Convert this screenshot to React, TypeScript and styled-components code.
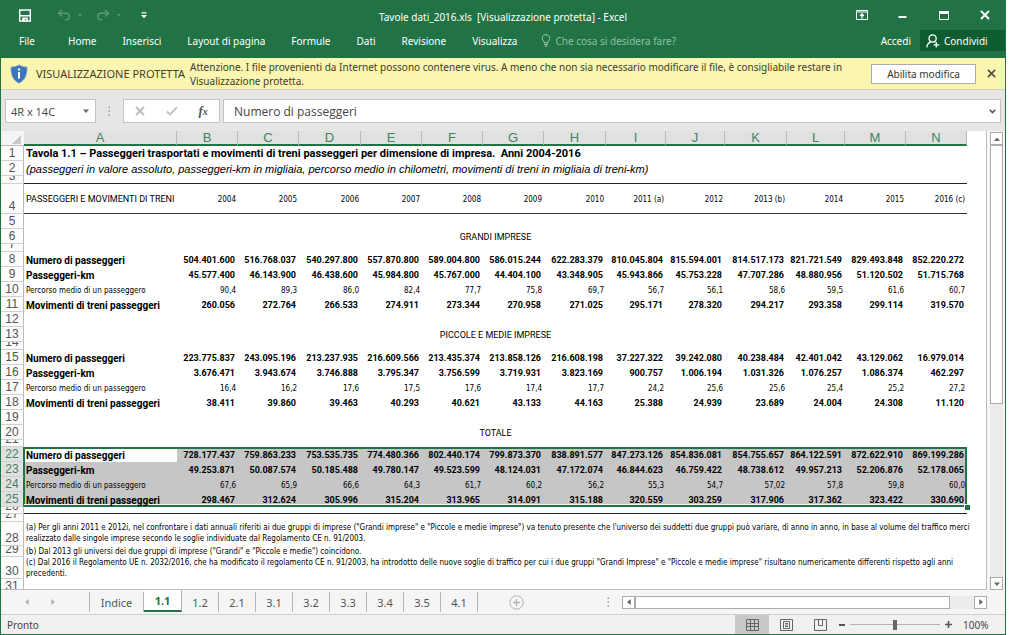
import React from 'react';
import styled, { createGlobalStyle, css } from 'styled-components';

const GREEN = '#217346';
const UI = '"Noto Sans", "Open Sans", sans-serif';
const UI_WIDE = '"Open Sans", "Noto Sans", sans-serif';
const SHEET = 'Roboto, "Liberation Sans", sans-serif';
const SMALL = '"DejaVu Sans Condensed", "DejaVu Sans", sans-serif';
const ARIAL = '"Liberation Sans", Arial, sans-serif';

const GlobalStyle = createGlobalStyle`
  * { box-sizing: border-box; }
  body { margin: 0; background: #fff; font-family: ${UI}; }
  button, input { font-family: inherit; margin: 0; padding: 0; border: 0; background: none; color: inherit; }
  svg { display: block; flex: none; }
`;

const Page = styled.div`
  height: 100vh;
  padding-right: 18px;
`;

const Window = styled.div`
  height: 100%;
  display: flex;
  flex-direction: column;
  border: 1px solid ${GREEN};
  border-top: 0;
  background: #e6e6e6;
`;

/* ---------- title bar and ribbon ---------- */

const Ribbon = styled.header`
  flex: none;
  background: ${GREEN};
  color: #fff;
  padding-bottom: 7px;
`;

const TitleBar = styled.div`
  display: grid;
  grid-template-columns: 1fr auto 1fr;
  align-items: center;
  height: 30px;
`;

const QuickAccess = styled.div`
  display: flex;
  align-items: center;
  padding-left: 17px;
`;

const QuickButton = styled.button<{ $gap?: number; $dim?: boolean }>`
  display: flex;
  align-items: center;
  gap: 7px;
  margin-right: ${(p) => p.$gap ?? 0}px;
  color: ${(p) => (p.$dim ? '#5c9a76' : '#fff')};
`;

const Title = styled.h1`
  margin: 3px 0 0;
  font-size: 10px;
  line-height: 14px;
  font-weight: 400;
  white-space: pre;
`;

const WindowButtons = styled.div`
  display: flex;
  justify-content: flex-end;
`;

const WindowButton = styled.button`
  width: 41px;
  height: 28px;
  display: flex;
  align-items: center;
  justify-content: center;
  color: #fff;
`;

const Menu = styled.nav`
  display: flex;
  align-items: center;
  height: 21px;
  font-size: 10px;
`;

const MenuTab = styled.button<{ $file?: boolean }>`
  height: 21px;
  padding: ${(p) => (p.$file ? '0 20px 0 18px' : '0 13px')};
  font-size: 10px;
  color: #fff;
`;

const TellMe = styled.label`
  display: flex;
  align-items: center;
  gap: 4px;
  flex: 1;
  padding-left: 11px;
  color: #a3cdb4;
  input { flex: 1; min-width: 0; font-size: 10px; }
  input::placeholder { color: #8fc0a3; opacity: 1; }
`;

const SignIn = styled.button`
  font-size: 10px;
  color: #fff;
  padding: 0 9px;
`;

const Share = styled.button`
  display: flex;
  align-items: center;
  gap: 4px;
  width: 85px;
  height: 21px;
  padding-left: 6px;
  background: #0e5c2f;
  color: #fff;
  font-size: 10px;
`;

/* ---------- protected view message ---------- */

const Message = styled.section`
  flex: none;
  display: flex;
  align-items: center;
  height: 32px;
  padding-left: 9px;
  background: #faf5b0;
  border-bottom: 1px solid #d2d0b4;
  color: #3f3d2c;
`;

const MessageTitle = styled.strong`
  margin-left: 8px;
  width: 154px;
  font-size: 11px;
  font-weight: 400;
  white-space: nowrap;
`;

const MessageText = styled.p`
  flex: 1;
  margin: 0;
  font-size: 10px;
  line-height: 14px;
`;

const EnableButton = styled.button`
  width: 105px;
  height: 20px;
  margin-left: 24px;
  background: #fff;
  border: 1px solid #ababab;
  color: #333;
  font-size: 10px;
`;

const CloseMessage = styled.button`
  width: 29px;
  padding-left: 2px;
  display: flex;
  justify-content: center;
  color: #57553f;
`;

/* ---------- formula bar ---------- */

const FormulaBar = styled.div`
  flex: none;
  display: flex;
  align-items: center;
  height: 41px;
  padding: 1px 4px 0 4px;
`;

const Box = styled.div<{ $width?: number }>`
  display: flex;
  align-items: center;
  height: 24px;
  ${(p) => (p.$width ? css`width: ${p.$width}px;` : css`flex: 1; margin-left: 3px;`)}
  background: #fff;
  border: 1px solid #c3c3c3;
  color: #444;
  input { flex: 1; min-width: 0; height: 22px; font: 12px ${UI_WIDE}; color: #444; }
`;

const NameInput = styled.input`
  padding-left: 5px;
  && { font-size: 11px; }
`;

const FormulaInput = styled.input`
  padding-left: 10px;
`;

const BoxButton = styled.button<{ $width: number }>`
  width: ${(p) => p.$width}px;
  display: flex;
  justify-content: center;
`;

const Grip = styled.span`
  width: 27px;
  flex: none;
  display: flex;
  justify-content: center;
`;

const FxText = styled.span`
  font: italic 700 13px/16px "Liberation Serif", serif;
  color: #555;
  small { font-size: 10px; }
`;

/* ---------- worksheet ---------- */

const Work = styled.main`
  flex: 1 1 0;
  min-height: 0;
  display: flex;
  background: #f7f7f7;
`;

const SheetPane = styled.div`
  flex: 1;
  min-width: 0;
  overflow: hidden;
  background: #fff;
  border-right: 1px solid #bdbdbd;
  border-bottom: 1px solid #bdbdbd;
`;

const Grid = styled.table`
  table-layout: fixed;
  width: 966px;
  border-collapse: separate;
  border-spacing: 0;
  color: #000;
  font-family: ${SHEET};
  th, td { padding: 0; font-weight: 400; }
`;

const Corner = styled.th`
  height: 15px;
  border-bottom: 1px solid #bbb;
  background: #f5f5f5;
  svg { margin: 3px 3px 0 auto; }
`;

const ColumnHead = styled.th`
  height: 15px;
  background: #e1e1e1;
  border-right: 1px solid #bcbcbc;
  border-bottom: 2px solid ${GREEN};
  color: #3f8560;
  font: 13px/13px ${ARIAL};
  text-align: center;
`;

const RowHead = styled.th<{ $height: number; $on?: boolean }>`
  border-right: 1px solid ${(p) => (p.$on ? GREEN : '#bbb')};
  border-bottom: 1px solid #d0d0d0;
  background: ${(p) => (p.$on ? '#e1e1e1' : '#fcfcfc')};
  color: ${(p) => (p.$on ? '#3f8560' : '#555')};
  font: 12px/13px ${ARIAL};
  span {
    display: flex;
    align-items: flex-end;
    justify-content: center;
    height: ${(p) => p.$height - 1}px;
    overflow: hidden;
  }
`;

type CellProps = {
  $bold?: boolean;
  $label?: boolean;
  $selected?: boolean;
  $active?: boolean;
  $edges?: string;
};

const Cell = styled.td<CellProps>`
  position: relative;
  white-space: nowrap;
  line-height: 13px;
  text-align: ${(p) => (p.$label ? 'left' : 'right')};
  && {
    padding: ${(p) => (p.$label ? '1px 0 0 2px' : p.$bold ? '1px 3px 0 0' : '1px 2px 0 0')};
    font-weight: ${(p) => (p.$bold ? 700 : 400)};
  }
  font-size: ${(p) => (p.$bold ? (p.$label ? 10 : 9) : 8)}px;
  ${(p) => !p.$bold && css`font-family: ${SMALL};`}
  background: ${(p) => (p.$selected && !p.$active ? '#c6c6c6' : 'transparent')};
  box-shadow: ${(p) => p.$edges || 'none'};
`;

const FillHandle = styled.i`
  position: absolute;
  right: -3px;
  bottom: -3px;
  width: 6px;
  height: 6px;
  background: ${GREEN};
  border: 1px solid #fff;
  border-width: 1px 0 0 1px;
`;

const YearCell = styled.td<{ $label?: boolean }>`
  border-bottom: 1px solid #333;
  ${(p) => (p.$label ? css`font-size: 9px;` : css`font: 8px/13px ${SMALL};`)}
  text-align: ${(p) => (p.$label ? 'left' : 'right')};
  white-space: nowrap;
  && { padding: ${(p) => (p.$label ? '1px 0 0 2px' : '1px 2px 0 0')}; }
`;

const Blank = styled.td<{ $rule?: boolean }>`
  ${(p) => p.$rule && css`border-bottom: 1px solid #222;`}
`;

const Section = styled.td`
  font-size: 9px;
  line-height: 13px;
  text-align: center;
  && { padding-top: 2px; }
`;

const Heading = styled.td<{ $italic?: boolean }>`
  white-space: pre;
  line-height: 14px;
  font-size: 11px;
  && { padding-left: 2px; font-weight: ${(p) => (p.$italic ? 400 : 700)}; }
  ${(p) => p.$italic && css`font-style: italic; font-family: ${ARIAL};`}
`;

const Note = styled.td`
  font-family: ${SMALL};
  font-size: 8px;
  line-height: 11px;
  white-space: nowrap;
  vertical-align: top;
  && { padding-left: 2px; }
`;

const VScroll = styled.div`
  width: 18px;
  flex: none;
  display: flex;
  flex-direction: column;
  padding: 1px 2px 0 3px;
`;

const ScrollButton = styled.button`
  width: 13px;
  height: 13px;
  flex: none;
  display: flex;
  align-items: center;
  justify-content: center;
  background: #fff;
  border: 1px solid #ababab;
`;

const Track = styled.div<{ $row?: boolean }>`
  flex: 1;
  display: flex;
  flex-direction: ${(p) => (p.$row ? 'row' : 'column')};
  background: #ececec;
`;

const Thumb = styled.div<{ $share: number }>`
  flex: 0 0 ${(p) => p.$share}%;
  background: #fff;
  border: 1px solid #ababab;
`;

/* ---------- sheet tabs ---------- */

const TabBar = styled.footer`
  flex: none;
  display: flex;
  align-items: stretch;
  height: 25px;
  background: #f5f5f5;
  border-bottom: 1px solid #d0d0d0;
  color: #555;
`;

const TabNav = styled.div`
  display: flex;
  align-items: center;
  gap: 20px;
  width: 88px;
  padding-left: 23px;
`;

const SheetTabs = styled.div`
  display: flex;
  align-items: flex-start;
`;

const SheetTab = styled.button<{ $active?: boolean; $wide?: boolean }>`
  width: ${(p) => (p.$wide ? 55 : 37)}px;
  height: 20px;
  margin-top: 2px;
  font-size: 11px;
  color: #555;
  border-right: 1px solid #b5b5b5;
  ${(p) => p.$wide && css`border-left: 1px solid #b5b5b5;`}
  ${(p) =>
    p.$active &&
    css`
      width: 38px;
      height: 22px;
      margin-top: 0;
      background: #fff;
      border-bottom: 2px solid ${GREEN};
      color: ${GREEN};
      font-weight: 700;
    `}
`;

const AddSheet = styled.button`
  margin-left: 31px;
  display: flex;
  align-items: center;
`;

const HScroll = styled.div`
  display: flex;
  align-items: center;
  margin-left: auto;
  width: 39%;
  ${Track} { height: 13px; }
`;

const TabBarEnd = styled.div`
  width: 18px;
  flex: none;
`;

/* ---------- status bar ---------- */

const StatusBar = styled.div`
  flex: none;
  display: flex;
  align-items: center;
  height: 19px;
  background: #f1f1f1;
  color: #444;
  font-size: 10px;
`;

const Ready = styled.span`
  flex: 1;
  padding-left: 6px;
`;

const ViewButton = styled.button<{ $on?: boolean }>`
  width: 34px;
  height: 19px;
  display: flex;
  align-items: center;
  justify-content: center;
  background: ${(p) => (p.$on ? '#c8c8c8' : 'transparent')};
`;

const ZoomButton = styled.button`
  width: 10px;
  height: 19px;
  display: flex;
  align-items: center;
  justify-content: center;
`;

const ZoomRange = styled.input`
  appearance: none;
  width: 92px;
  height: 12px;
  margin: 0 2px;
  background: linear-gradient(#b4b4b4, #b4b4b4) center / 90px 1px no-repeat;
  &::-webkit-slider-thumb {
    appearance: none;
    width: 4px;
    height: 10px;
    background: #666;
  }
`;

const ZoomValue = styled.span`
  width: 52px;
  padding-left: 10px;
`;

/* ---------- data ---------- */

const COLUMNS: [string, number][] = [
  ['A', 153], ['B', 61], ['C', 61], ['D', 62], ['E', 61], ['F', 61], ['G', 61],
  ['H', 62], ['I', 60], ['J', 59], ['K', 62], ['L', 58], ['M', 61], ['N', 61],
];

const YEARS = '2004|2005|2006|2007|2008|2009|2010|2011 (a)|2012|2013 (b)|2014|2015|2016 (c)'.split('|');

type RowData =
  | { n: number; h: number; kind: 'blank'; rule?: boolean }
  | { n: number; h: number; kind: 'years' }
  | { n: number; h: number; kind: 'heading'; text: string; italic?: boolean }
  | { n: number; h: number; kind: 'section'; text: string }
  | { n: number; h: number; kind: 'note'; lines: string[] }
  | { n: number; h: number; kind: 'data'; label: string; bold: boolean; values: string[] };

const blank = (n: number, h = 15, rule = false): RowData => ({ n, h, kind: 'blank', rule });
const section = (n: number, text: string): RowData => ({ n, h: 15, kind: 'section', text });
const data = (n: number, label: string, values: string, bold = true): RowData => ({
  n, h: 15, kind: 'data', label, bold, values: values.split(' '),
});

const PASS = 'Numero di passeggeri';
const KM = 'Passeggeri-km';
const AVG = 'Percorso medio di un passeggero';
const TRAINS = 'Movimenti di treni passeggeri';

const ROWS: RowData[] = [
  { n: 1, h: 15, kind: 'heading', text: 'Tavola 1.1 – Passeggeri trasportati e movimenti di treni passeggeri per dimensione di impresa.  Anni 2004-2016' },
  { n: 2, h: 15, kind: 'heading', italic: true, text: '(passeggeri in valore assoluto, passeggeri-km in migliaia, percorso medio in chilometri, movimenti di treni in migliaia di treni-km)' },
  blank(3, 8, true),
  { n: 4, h: 30, kind: 'years' },
  blank(5),
  section(6, 'GRANDI IMPRESE'),
  blank(7, 8),
  data(8, PASS, '504.401.600 516.768.037 540.297.800 557.870.800 589.004.800 586.015.244 622.283.379 810.045.804 815.594.001 814.517.173 821.721.549 829.493.848 852.220.272'),
  data(9, KM, '45.577.400 46.143.900 46.438.600 45.984.800 45.767.000 44.404.100 43.348.905 45.943.866 45.753.228 47.707.286 48.880.956 51.120.502 51.715.768'),
  data(10, AVG, '90,4 89,3 86,0 82,4 77,7 75,8 69,7 56,7 56,1 58,6 59,5 61,6 60,7', false),
  data(11, TRAINS, '260.056 272.764 266.533 274.911 273.344 270.958 271.025 295.171 278.320 294.217 293.358 299.114 319.570'),
  blank(12),
  section(13, 'PICCOLE E MEDIE IMPRESE'),
  blank(14, 8),
  data(15, PASS, '223.775.837 243.095.196 213.237.935 216.609.566 213.435.374 213.858.126 216.608.198 37.227.322 39.242.080 40.238.484 42.401.042 43.129.062 16.979.014'),
  data(16, KM, '3.676.471 3.943.674 3.746.888 3.795.347 3.756.599 3.719.931 3.823.169 900.757 1.006.194 1.031.326 1.076.257 1.086.374 462.297'),
  data(17, AVG, '16,4 16,2 17,6 17,5 17,6 17,4 17,7 24,2 25,6 25,6 25,4 25,2 27,2', false),
  data(18, TRAINS, '38.411 39.860 39.463 40.293 40.621 43.133 44.163 25.388 24.939 23.689 24.004 24.308 11.120'),
  blank(19),
  section(20, 'TOTALE'),
  blank(21, 7),
  data(22, PASS, '728.177.437 759.863.233 753.535.735 774.480.366 802.440.174 799.873.370 838.891.577 847.273.126 854.836.081 854.755.657 864.122.591 872.622.910 869.199.286'),
  data(23, KM, '49.253.871 50.087.574 50.185.488 49.780.147 49.523.599 48.124.031 47.172.074 46.844.623 46.759.422 48.738.612 49.957.213 52.206.876 52.178.065'),
  data(24, AVG, '67,6 65,9 66,6 64,3 61,7 60,2 56,2 55,3 54,7 57,02 57,8 59,8 60,0', false),
  data(25, TRAINS, '298.467 312.624 305.996 315.204 313.965 314.091 315.188 320.559 303.259 317.906 317.362 323.422 330.690'),
  blank(26, 7, true),
  blank(27, 8),
  { n: 28, h: 24, kind: 'note', lines: [
    '(a)  Per gli anni 2011 e 2012i, nel confrontare i dati annuali riferiti ai due gruppi di imprese ("Grandi imprese" e "Piccole e medie imprese") va tenuto presente che l\'universo dei suddetti due gruppi può variare, di anno in anno, in base al volume del traffico merci',
    'realizzato dalle singole imprese secondo le soglie individuate dal Regolamento CE n. 91/2003.',
  ] },
  { n: 29, h: 11, kind: 'note', lines: ['(b) Dal 2013 gli universi dei due gruppi di imprese ("Grandi" e "Piccole e medie") coincidono.'] },
  { n: 30, h: 22, kind: 'note', lines: [
    '(c) Dal 2016 il Regolamento UE n. 2032/2016, che ha modificato il regolamento CE n. 91/2003, ha introdotto delle nuove soglie di traffico per cui i due gruppi "Grandi Imprese" e "Piccole e medie imprese" risultano numericamente differenti rispetto agli anni',
    'precedenti.',
  ] },
  blank(31),
];

const SELECTION = { first: 22, last: 25 };

function edges(row: number, col: number, lastCol: number) {
  const list: string[] = [];
  if (row === SELECTION.first) list.push(`inset 0 2px ${GREEN}`);
  if (row === SELECTION.last) list.push(`inset 0 -2px ${GREEN}`, 'inset 0 -3px #eef5f0');
  if (col === 0) list.push(`inset 1px 0 ${GREEN}`);
  if (col === lastCol) list.push(`inset -2px 0 ${GREEN}`);
  return list.join(', ');
}

function SheetRow({ row }: { row: RowData }) {
  const selected = row.n >= SELECTION.first && row.n <= SELECTION.last;
  const span = COLUMNS.length;
  return (
    <tr>
      <RowHead scope="row" $height={row.h} $on={selected}><span>{row.n}</span></RowHead>
      {row.kind === 'blank' && <Blank colSpan={span} $rule={row.rule} />}
      {row.kind === 'heading' && <Heading colSpan={span} $italic={row.italic}>{row.text}</Heading>}
      {row.kind === 'section' && <Section colSpan={span}>{row.text}</Section>}
      {row.kind === 'note' && (
        <Note colSpan={span}>{row.lines.map((l) => <div key={l}>{l}</div>)}</Note>
      )}
      {row.kind === 'years' && (
        <>
          <YearCell $label>PASSEGGERI E MOVIMENTI DI TRENI</YearCell>
          {YEARS.map((y) => <YearCell key={y}>{y}</YearCell>)}
        </>
      )}
      {row.kind === 'data' &&
        [row.label, ...row.values].map((v, i) => (
          <Cell
            key={i}
            $label={i === 0}
            $bold={row.bold}
            $selected={selected}
            $active={i === 0 && row.n === SELECTION.first}
            $edges={selected ? edges(row.n, i, row.values.length) : undefined}
          >
            {v}
            {row.n === SELECTION.last && i === row.values.length && <FillHandle />}
          </Cell>
        ))}
    </tr>
  );
}

/* ---------- icons ---------- */

const Arrow = ({ dir, size = 6, color = '#666' }: { dir: 'up' | 'down' | 'left' | 'right'; size?: number; color?: string }) => {
  const d = { up: 'M0 5 L3 1.5 L6 5Z', down: 'M0 1.5 L3 5 L6 1.5Z', left: 'M4.8 0 L1 3 L4.8 6Z', right: 'M1.2 0 L5 3 L1.2 6Z' }[dir];
  return <svg width={size} height={size} viewBox="0 0 6 6"><path d={d} fill={color} /></svg>;
};

const SaveIcon = () => (
  <svg width="14" height="13" viewBox="0 0 14 13">
    <path d="M1.7 0.9H12.300V12.100H1.700Z M1.700 6.700H12.300" fill="none" stroke="currentColor" strokeWidth="1.5" />
    <path d="M4.200 8.500H9.800V12.500H8.300V10.300H6.800V12.500H4.200Z" fill="currentColor" />
  </svg>
);

const UndoIcon = ({ flip }: { flip?: boolean }) => (
  <svg width="14" height="12" viewBox="0 0 14 12">
    <g transform={flip ? 'translate(14 0) scale(-1 1)' : undefined} fill="none" stroke="currentColor" strokeWidth="1.5">
      <path d="M5 1L1.5 4.2L5 7.5" />
      <path d="M2 4.2H9C13.6 4.2 13.6 10.8 8 10.8" />
    </g>
  </svg>
);

const CustomizeIcon = () => (
  <svg width="6" height="7" viewBox="0 0 6 7"><path d="M0.5 0.3H5.5V1.5H0.5Z M0 3H6L3 6.2Z" fill="#fff" /></svg>
);

const RibbonOptionsIcon = () => (
  <svg width="12" height="10" viewBox="0 0 12 10" fill="none" stroke="currentColor">
    <path d="M0.5 0.5H11.5V9.5H0.5Z M0.5 2H11.5" />
    <path d="M6 8.5V4.5 M4 6L6 4L8 6" strokeWidth="1.3" />
  </svg>
);

const MinimizeIcon = () => <svg width="9" height="9" viewBox="0 0 9 9"><path d="M0.5 5H8.5V7H0.5Z" fill="currentColor" /></svg>;
const MaximizeIcon = () => (
  <svg width="10" height="9" viewBox="0 0 10 9"><path d="M0.5 0.5H9.5V8.5H0.5Z" fill="none" stroke="currentColor" /><path d="M0 0H10V3H0Z" fill="currentColor" /></svg>
);
const CrossIcon = ({ size, width, color = 'currentColor' }: { size: number; width: number; color?: string }) => (
  <svg width={size} height={size} viewBox="0 0 10 10"><path d="M1 1L9 9M9 1L1 9" fill="none" stroke={color} strokeWidth={width} /></svg>
);

const BulbIcon = () => (
  <svg width="10" height="13" viewBox="0 0 10 13" fill="none" stroke="currentColor">
    <path d="M3.2 9V7.6C0 5.6 0.6 0.7 5 0.7S10 5.6 6.8 7.6V9Z M3.2 10.6H6.8 M3.8 12.2H6.2" />
  </svg>
);

const PersonIcon = () => (
  <svg width="14" height="14" viewBox="0 0 14 14" fill="none" stroke="currentColor" strokeWidth="1.3">
    <circle cx="6.6" cy="4.4" r="3.6" />
    <path d="M0.8 13.4C1 10.4 2.6 8.8 4.6 7.6 M8.4 7.4L9.4 8.4 M10.3 8V13.6 M7.6 10.8H13.4" />
  </svg>
);

const ShieldIcon = () => (
  <svg width="18" height="20" viewBox="0 0 18 20">
    <path d="M9 0.8C11.4 2.4 14 3 17 3C17.4 10.6 15.4 16 9 19.2C2.6 16 0.6 10.6 1 3C4 3 6.6 2.4 9 0.8Z" fill="#3c76b8" stroke="#8fb0d6" strokeWidth="0.8" />
    <path d="M8 4.6H10V6.6H8Z M8 8H10V14.6H8Z" fill="#fff" />
  </svg>
);

const GripIcon = () => (
  <svg width="3" height="11" viewBox="0 0 3 11"><path d="M0.5 0.5H2V2H0.5Z M0.5 4.5H2V6H0.5Z M0.5 8.5H2V10H0.5Z" fill="#999" /></svg>
);

const CheckIcon = () => (
  <svg width="12" height="10" viewBox="0 0 12 10"><path d="M1 5.5L4 8.5L11 1" fill="none" stroke="#bdbdbd" strokeWidth="1.8" /></svg>
);

const ChevronIcon = () => (
  <svg width="7" height="5" viewBox="0 0 7 5"><path d="M0.7 0.8L3.5 3.6L6.3 0.8" fill="none" stroke="#555" strokeWidth="1.6" /></svg>
);

const PlusCircle = () => (
  <svg width="15" height="15" viewBox="0 0 15 15" fill="none" stroke="#b3b3b3"><circle cx="7.5" cy="7.5" r="6.7" /><path d="M7.5 4V11M4 7.5H11" strokeWidth="1.3" /></svg>
);

const NormalViewIcon = () => (
  <svg width="13" height="12" viewBox="0 0 13 12" fill="none" stroke="#666"><path d="M0.5 0.5H12.5V11.5H0.5Z M4.5 0.5V11.5 M8.5 0.5V11.5 M0.5 4.5H12.5 M0.5 7.5H12.5" /></svg>
);
const PageViewIcon = () => (
  <svg width="13" height="12" viewBox="0 0 13 12" fill="none" stroke="#666"><path d="M0.5 0.5H12.5V11.5H0.5Z M3.5 2.5H9.5V9.5H3.5Z M5 4.5H8 M5 6H8 M5 7.5H8" /></svg>
);
const BreakViewIcon = () => (
  <svg width="13" height="12" viewBox="0 0 13 12" fill="none" stroke="#666"><path d="M0.5 0.5H12.5V11.5H0.5Z M4.5 0.5V6.5H8.5V0.5" /></svg>
);

/* ---------- page ---------- */

const MENU = ['Home', 'Inserisci', 'Layout di pagina', 'Formule', 'Dati', 'Revisione', 'Visualizza'];
const SHEETS = ['Indice', '1.1', '1.2', '2.1', '3.1', '3.2', '3.3', '3.4', '3.5', '4.1'];

export default function App() {
  return (
    <Page>
      <GlobalStyle />
      <Window>
        <Ribbon>
          <TitleBar>
            <QuickAccess>
              <QuickButton $gap={25} aria-label="Salva"><SaveIcon /></QuickButton>
              <QuickButton $gap={14} $dim aria-label="Annulla"><UndoIcon /><Arrow dir="down" size={4} color="#5c9a76" /></QuickButton>
              <QuickButton $gap={20} $dim aria-label="Ripristina"><UndoIcon flip /><Arrow dir="down" size={4} color="#5c9a76" /></QuickButton>
              <QuickButton aria-label="Personalizza"><CustomizeIcon /></QuickButton>
            </QuickAccess>
            <Title>{'Tavole dati_2016.xls  [Visualizzazione protetta] - Excel'}</Title>
            <WindowButtons>
              <WindowButton aria-label="Opzioni barra multifunzione"><RibbonOptionsIcon /></WindowButton>
              <WindowButton aria-label="Riduci a icona"><MinimizeIcon /></WindowButton>
              <WindowButton aria-label="Ingrandisci"><MaximizeIcon /></WindowButton>
              <WindowButton aria-label="Chiudi"><CrossIcon size={10} width={2} /></WindowButton>
            </WindowButtons>
          </TitleBar>
          <Menu>
            <MenuTab $file>File</MenuTab>
            {MENU.map((m) => <MenuTab key={m}>{m}</MenuTab>)}
            <TellMe>
              <BulbIcon />
              <input type="text" placeholder="Che cosa si desidera fare?" aria-label="Che cosa si desidera fare?" />
            </TellMe>
            <SignIn>Accedi</SignIn>
            <Share><PersonIcon />Condividi</Share>
          </Menu>
        </Ribbon>

        <Message>
          <ShieldIcon />
          <MessageTitle>VISUALIZZAZIONE PROTETTA</MessageTitle>
          <MessageText>
            Attenzione. I file provenienti da Internet possono contenere virus. A meno che non sia necessario modificare il file, è consigliabile restare in Visualizzazione protetta.
          </MessageText>
          <EnableButton>Abilita modifica</EnableButton>
          <CloseMessage aria-label="Chiudi messaggio"><CrossIcon size={9} width={2} /></CloseMessage>
        </Message>

        <FormulaBar>
          <Box $width={91}>
            <NameInput aria-label="Casella nome" defaultValue="4R x 14C" />
            <BoxButton $width={18} aria-label="Elenco nomi"><Arrow dir="down" /></BoxButton>
          </Box>
          <Grip><GripIcon /></Grip>
          <Box $width={97}>
            <BoxButton $width={32} aria-label="Annulla immissione"><CrossIcon size={10} width={2} color="#bdbdbd" /></BoxButton>
            <BoxButton $width={32} aria-label="Invio"><CheckIcon /></BoxButton>
            <BoxButton $width={32} aria-label="Inserisci funzione"><FxText>f<small>x</small></FxText></BoxButton>
          </Box>
          <Box>
            <FormulaInput aria-label="Barra della formula" defaultValue="Numero di passeggeri" />
            <BoxButton $width={15} aria-label="Espandi barra della formula"><ChevronIcon /></BoxButton>
          </Box>
        </FormulaBar>

        <Work>
          <SheetPane>
            <Grid>
              <colgroup>
                <col width={23} />
                {COLUMNS.map(([name, w]) => <col key={name} width={w} />)}
              </colgroup>
              <thead>
                <tr>
                  <Corner aria-label="Seleziona tutto"><svg width="9" height="9" viewBox="0 0 9 9"><path d="M9 0V9H0Z" fill="#c9c9c9" /></svg></Corner>
                  {COLUMNS.map(([name]) => <ColumnHead key={name} scope="col">{name}</ColumnHead>)}
                </tr>
              </thead>
              <tbody>{ROWS.map((r) => <SheetRow key={r.n} row={r} />)}</tbody>
            </Grid>
          </SheetPane>
          <VScroll>
            <ScrollButton aria-label="Scorri in alto"><Arrow dir="up" /></ScrollButton>
            <Track><Thumb $share={60} /></Track>
            <ScrollButton aria-label="Scorri in basso"><Arrow dir="down" /></ScrollButton>
          </VScroll>
        </Work>

        <TabBar>
          <TabNav><Arrow dir="left" color="#b5b5b5" /><Arrow dir="right" color="#b5b5b5" /></TabNav>
          <SheetTabs>
            {SHEETS.map((s) => <SheetTab key={s} $wide={s === 'Indice'} $active={s === '1.1'}>{s}</SheetTab>)}
          </SheetTabs>
          <AddSheet aria-label="Nuovo foglio"><PlusCircle /></AddSheet>
          <HScroll>
            <Grip><GripIcon /></Grip>
            <ScrollButton aria-label="Scorri a sinistra"><Arrow dir="left" /></ScrollButton>
            <Track $row><Thumb $share={93} /></Track>
            <ScrollButton aria-label="Scorri a destra"><Arrow dir="right" /></ScrollButton>
          </HScroll>
          <TabBarEnd />
        </TabBar>

        <StatusBar>
          <Ready>Pronto</Ready>
          <ViewButton $on aria-label="Normale"><NormalViewIcon /></ViewButton>
          <ViewButton aria-label="Layout di pagina"><PageViewIcon /></ViewButton>
          <ViewButton aria-label="Anteprima interruzioni di pagina"><BreakViewIcon /></ViewButton>
          <ZoomButton aria-label="Zoom indietro"><svg width="6" height="6" viewBox="0 0 6 6"><path d="M0 2H6V4H0Z" fill="#555" /></svg></ZoomButton>
          <ZoomRange type="range" min={10} max={190} defaultValue={100} aria-label="Zoom" />
          <ZoomButton aria-label="Zoom avanti"><svg width="7" height="7" viewBox="0 0 7 7"><path d="M0 3.5H7M3.5 0V7" stroke="#555" strokeWidth="1.6" /></svg></ZoomButton>
          <ZoomValue>100%</ZoomValue>
        </StatusBar>
      </Window>
    </Page>
  );
}
